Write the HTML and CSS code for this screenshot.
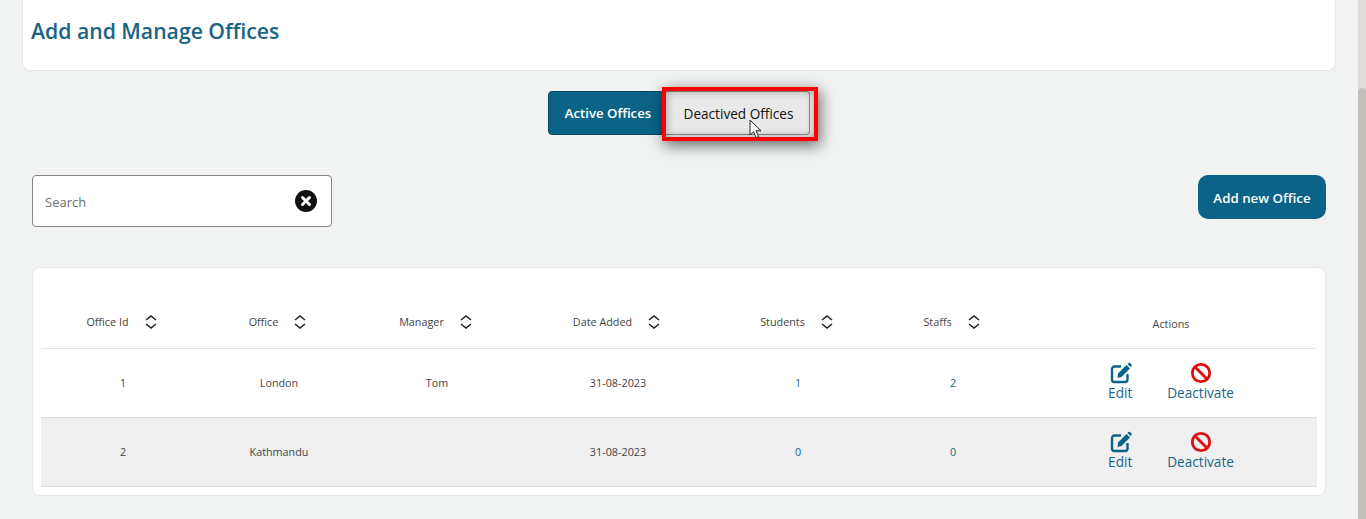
FILE: index.html
```html
<!DOCTYPE html>
<html lang="en">
<head>
    <meta charset="UTF-8">
    <meta name="viewport" content="width=device-width, initial-scale=1.0">
    <title>Offices</title>
    <link rel="stylesheet" href="styles.css">
</head>
<body>
    <div class="scrollbar"><div class="scrollbar-thumb"></div></div>

    <div class="container">
        <div class="title-card">
            <h1>Add and Manage Offices</h1>
        </div>

        <div class="tabs">
            <button class="tab tab-active">Active Offices</button>
            <button class="tab tab-hover">Deactived Offices</button>
            <div class="highlight"></div>
            <svg class="cursor" width="14" height="20" viewBox="0 0 14 20">
                <path d="M1 1v15l3.6-3.3 2.5 6 2.6-1.1-2.6-5.8H12z" fill="#fff" stroke="#222" stroke-width="1"/>
            </svg>
        </div>

        <div class="toolbar">
            <div class="search">
                <span class="search-text">Search</span>
                <svg width="22" height="22" viewBox="0 0 22 22">
                    <circle cx="11" cy="11" r="11" fill="#111"/>
                    <path d="M7.5 7.5l7 7M14.5 7.5l-7 7" stroke="#fff" stroke-width="3" stroke-linecap="round"/>
                </svg>
            </div>
            <button class="add-btn">Add new Office</button>
        </div>

        <div class="table-card">
            <table>
                <colgroup>
                    <col class="col-id">
                    <col class="col-office">
                    <col class="col-manager">
                    <col class="col-date">
                    <col class="col-students">
                    <col class="col-staffs">
                    <col class="col-actions">
                </colgroup>
                <thead>
                    <tr>
                        <th><span class="th-inner">Office Id <svg class="sort" width="12" height="14" viewBox="0 0 12 14"><path d="M1 5l5-4 5 4M1 9l5 4 5-4" fill="none" stroke="#222" stroke-width="1.6"/></svg></span></th>
                        <th><span class="th-inner">Office <svg class="sort" width="12" height="14" viewBox="0 0 12 14"><path d="M1 5l5-4 5 4M1 9l5 4 5-4" fill="none" stroke="#222" stroke-width="1.6"/></svg></span></th>
                        <th><span class="th-inner">Manager <svg class="sort" width="12" height="14" viewBox="0 0 12 14"><path d="M1 5l5-4 5 4M1 9l5 4 5-4" fill="none" stroke="#222" stroke-width="1.6"/></svg></span></th>
                        <th><span class="th-inner">Date Added <svg class="sort" width="12" height="14" viewBox="0 0 12 14"><path d="M1 5l5-4 5 4M1 9l5 4 5-4" fill="none" stroke="#222" stroke-width="1.6"/></svg></span></th>
                        <th><span class="th-inner">Students <svg class="sort" width="12" height="14" viewBox="0 0 12 14"><path d="M1 5l5-4 5 4M1 9l5 4 5-4" fill="none" stroke="#222" stroke-width="1.6"/></svg></span></th>
                        <th><span class="th-inner">Staffs <svg class="sort" width="12" height="14" viewBox="0 0 12 14"><path d="M1 5l5-4 5 4M1 9l5 4 5-4" fill="none" stroke="#222" stroke-width="1.6"/></svg></span></th>
                        <th class="th-actions">Actions</th>
                    </tr>
                </thead>
                <tbody>
                    <tr>
                        <td>1</td>
                        <td>London</td>
                        <td>Tom</td>
                        <td>31-08-2023</td>
                        <td><a href="#">1</a></td>
                        <td><a href="#">2</a></td>
                        <td>
                            <div class="actions">
                                <a class="action" href="#">
                                    <svg class="icon-edit" width="22" height="22" viewBox="0 0 22 22"><path d="M11 4.5H4.5A2.5 2.5 0 0 0 2 7v10.500A2.500 2.500 0 0 0 4.500 20H15a2.500 2.500 0 0 0 2.500-2.500V12" fill="none" stroke="#0b6488" stroke-width="2.400"/><path d="M8 11.500L16.500 3l3.500 3.500L11.500 15 7.500 16z" fill="#0b6488"/><path d="M17.500 2l1-1q.8-.6 1.500 0l1.500 1.500q.6.700 0 1.500l-1 1z" fill="#0b6488"/></svg>
                                    Edit
                                </a>
                                <a class="action" href="#">
                                    <svg width="22" height="22" viewBox="0 0 22 22"><circle cx="11" cy="11" r="8.700" fill="none" stroke="#e00d0d" stroke-width="2.800"/><path d="M5 5l12 12" stroke="#e00d0d" stroke-width="2.800"/></svg>
                                    Deactivate
                                </a>
                            </div>
                        </td>
                    </tr>
                    <tr class="row-alt">
                        <td>2</td>
                        <td>Kathmandu</td>
                        <td></td>
                        <td>31-08-2023</td>
                        <td><a href="#">0</a></td>
                        <td><a href="#">0</a></td>
                        <td>
                            <div class="actions">
                                <a class="action" href="#">
                                    <svg class="icon-edit" width="22" height="22" viewBox="0 0 22 22"><path d="M11 4.500H4.500A2.500 2.500 0 0 0 2 7v10.500A2.500 2.500 0 0 0 4.500 20H15a2.500 2.500 0 0 0 2.500-2.500V12" fill="none" stroke="#0b6488" stroke-width="2.400"/><path d="M8 11.500L16.500 3l3.500 3.500L11.500 15 7.500 16z" fill="#0b6488"/><path d="M17.500 2l1-1q.8-.6 1.500 0l1.500 1.500q.6.700 0 1.500l-1 1z" fill="#0b6488"/></svg>
                                    Edit
                                </a>
                                <a class="action" href="#">
                                    <svg width="22" height="22" viewBox="0 0 22 22"><circle cx="11" cy="11" r="8.700" fill="none" stroke="#e00d0d" stroke-width="2.800"/><path d="M5 5l12 12" stroke="#e00d0d" stroke-width="2.800"/></svg>
                                    Deactivate
                                </a>
                            </div>
                        </td>
                    </tr>
                </tbody>
            </table>
        </div>
    </div>
</body>
</html>
```

FILE: styles.css
```css
html, body {
    height: 100%;
}

body {
    font-family: "Open Sans", "Noto Sans", sans-serif;
    background-color: #f1f3f3;
    margin: 0;
    overflow: hidden;
    color: #333;
}

.scrollbar {
    position: absolute;
    top: 0;
    right: 0;
    bottom: 0;
    width: 8px;
    background-color: #e0dedc;
}

.scrollbar-thumb {
    margin-top: 88px;
    height: 431px;
    border-radius: 4px 4px 0 0;
    background-color: #c2c0bb;
}

.container {
    width: 1366px;
    box-sizing: border-box;
    padding-left: 22px;
}

.title-card {
    width: 1314px;
    height: 71px;
    box-sizing: border-box;
    background-color: #fff;
    border: 1px solid #e6e8e8;
    border-top: none;
    border-radius: 0 0 8px 8px;
    padding: 16px 0 0 8px;
}

h1 {
    margin: 0;
    font-size: 21.2px;
    line-height: 30px;
    font-weight: 600;
    color: #1b6483;
}

.tabs {
    position: relative;
    display: flex;
    justify-content: center;
    width: 1314px;
    margin-top: 20px;
}

.tab {
    height: 44px;
    box-sizing: border-box;
    font-family: inherit;
    font-size: 13px;
    border-radius: 4px;
    padding: 0;
}

.tab-active {
    width: 117px;
    background-color: #0b6488;
    border: 1px solid #07465f;
    color: #fff;
    font-size: 13.2px;
    font-weight: 600;
    padding-left: 3px;
    border-radius: 4px 0 0 4px;
}

.tab-hover {
    width: 145px;
    background-color: #e9e9e9;
    border: 1px solid #8a8a8a;
    border-left: none;
    border-radius: 0 4px 4px 0;
    color: #111;
    font-size: 13.6px;
    font-weight: 500;
    padding-left: 3px;
}

.highlight {
    position: absolute;
    left: 640px;
    top: -4px;
    width: 156px;
    height: 54px;
    box-sizing: border-box;
    border: 4px solid #f00;
    box-shadow: 2px 4px 14px rgba(0, 0, 0, 0.6), inset 0 0 10px rgba(0, 0, 0, 0.35);
}

.cursor {
    position: absolute;
    left: 727px;
    top: 28px;
}

.toolbar {
    display: flex;
    justify-content: space-between;
    align-items: flex-start;
    width: 1294px;
    margin: 40px 0 0 10px;
}

.search {
    width: 300px;
    height: 52px;
    box-sizing: border-box;
    display: flex;
    align-items: center;
    justify-content: space-between;
    background-color: #fff;
    border: 1px solid #858585;
    border-radius: 4px;
    padding: 0 14px 0 12px;
}

.search-text {
    font-size: 13px;
    line-height: 20px;
    padding-top: 1px;
    color: #6d6d6d;
}

.add-btn {
    width: 128px;
    height: 44px;
    background-color: #0b6488;
    border: none;
    border-radius: 10px;
    color: #fff;
    font-family: inherit;
    font-size: 13.3px;
    font-weight: 600;
    padding: 2px 0 0;
}

.table-card {
    width: 1294px;
    height: 229px;
    box-sizing: border-box;
    margin: 40px 0 0 10px;
    padding: 0 8px;
    background-color: #fff;
    border: 1px solid #e6e8e8;
    border-radius: 8px;
}

table {
    width: 1276px;
    table-layout: fixed;
    border-collapse: collapse;
    font-size: 10.8px;
    color: #444;
}

.col-id { width: 164px; }
.col-office { width: 148px; }
.col-manager { width: 168px; }
.col-date { width: 194px; }
.col-students { width: 166px; }
.col-staffs { width: 144px; }
.col-actions { width: 292px; }

th {
    height: 80px;
    padding: 28px 0 0;
    box-sizing: border-box;
    font-weight: 400;
    text-align: center;
    border-bottom: 1px solid #e3e5e5;
}

.th-inner {
    display: inline-flex;
    align-items: center;
    gap: 16px;
    margin-right: 3px;
}

.th-actions {
    padding-top: 32px;
}

td {
    height: 69px;
    padding: 0;
    box-sizing: border-box;
    text-align: center;
    border-bottom: 1px solid #dcdede;
}

td a {
    color: #1b6483;
    text-decoration: none;
}

.row-alt td {
    background-color: #f0f0f0;
}

.actions {
    display: flex;
    justify-content: center;
    gap: 35px;
    padding-bottom: 2px;
}

.action {
    display: flex;
    flex-direction: column;
    align-items: center;
    font-size: 13.6px;
    line-height: 18px;
    font-weight: 500;
}

.icon-edit {
    margin-left: 2px;
}
```
